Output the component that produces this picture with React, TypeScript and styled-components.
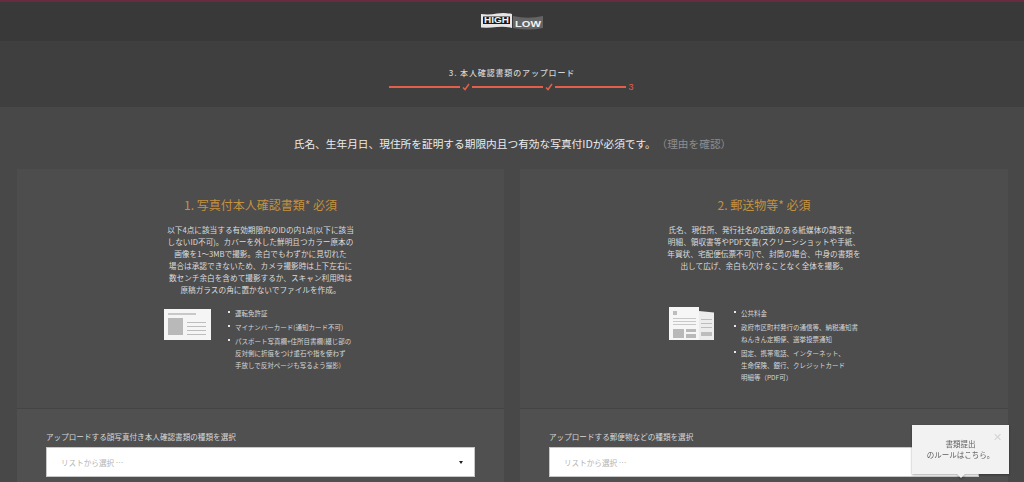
import styled, { createGlobalStyle } from "styled-components";

const GlobalStyle = createGlobalStyle`
    html, body {
        margin: 0;
        height: 482px;
        overflow: hidden;
        background-color: #484848;
    }
    body {
        font-family: "Noto Sans CJK JP", "Noto Sans", sans-serif;
        color: #e4e4e4;
    }
`;

const Page = styled.div`
    display: flex;
    flex-direction: column;
    height: 482px;
    overflow: hidden;
`;

const Header = styled.header`
    height: 39px;
    flex: none;
    display: flex;
    justify-content: center;
    align-items: center;
    background-color: #393939;
    border-top: 2px solid #6a2a42;
    box-sizing: content-box;
`;

const StepBar = styled.div`
    height: 66px;
    flex: none;
    display: flex;
    flex-direction: column;
    align-items: center;
    background-color: #3f3f3f;
`;

const StepTitle = styled.div`
    margin-top: 26px;
    font-size: 8px;
    line-height: 12px;
    letter-spacing: 0.85px;
    color: #d2d2d2;
    font-weight: 500;
`;

const Steps = styled.div`
    display: flex;
    align-items: center;
    height: 10px;
    margin-top: 3px;
    margin-left: 1px;
    column-gap: 2px;
    color: #e2604a;
`;

const StepLine = styled.div`
    width: 71px;
    height: 2px;
    background-color: #e2604a;
`;

const StepNumber = styled.span`
    font-size: 9px;
    line-height: 10px;
    width: 8px;
    margin-left: 1px;
    font-family: "Liberation Sans", sans-serif;
`;

const Main = styled.main`
    flex: 1;
    padding: 0 16px 0 17px;
    background-color: #484848;
`;

const Intro = styled.p`
    margin: 28px 0 0;
    height: 34px;
    font-size: 10.7px;
    line-height: 18px;
    text-align: center;
    color: #ececec;

    a {
        color: #8d8d8d;
        margin-left: 6px;
    }
`;

const Cards = styled.div`
    display: grid;
    grid-template-columns: 487px 488px;
    column-gap: 16px;
`;

const Card = styled.section`
    background-color: #4d4d4d;
`;

const Info = styled.div`
    height: 240px;
    padding-top: 26px;
    box-sizing: border-box;
    display: flex;
    flex-direction: column;
    align-items: center;
    border-bottom: 1px solid #444444;
`;

const Title = styled.h2`
    margin: 0;
    font-size: 12px;
    line-height: 20px;
    font-weight: 400;
    color: #c4923f;
`;

const Lead = styled.p`
    margin: 9px 0 0;
    height: 78px;
    font-size: 7.65px;
    line-height: 12px;
    text-align: center;
    color: #dcdcdc;
    white-space: nowrap;
`;

const Docs = styled.div<{ $left: number; $top: number; $gap: number }>`
    align-self: flex-start;
    display: flex;
    margin-left: ${(p) => p.$left}px;
    margin-top: ${(p) => p.$top}px;
    column-gap: ${(p) => p.$gap}px;
`;

const DocList = styled.ul`
    list-style: none;
    margin: 0;
    padding: 0;
    display: flex;
    flex-direction: column;
    row-gap: 2px;
    font-size: 6.5px;
    line-height: 12px;
    color: #d6d6d6;
    white-space: nowrap;
`;

const DocItem = styled.li`
    position: relative;
    padding-left: 7px;

    &::before {
        content: "";
        position: absolute;
        left: 0;
        top: 4px;
        width: 2px;
        height: 2px;
        background-color: #e6e6e6;
    }
`;

const Upload = styled.div`
    padding: 22px 29px 0;
    height: 80px;
    background-color: #505050;
`;

const UploadLabel = styled.label`
    display: block;
    font-size: 7.6px;
    line-height: 12px;
    color: #d8d8d8;
`;

const Select = styled.div`
    margin-top: 4px;
    height: 30px;
    box-sizing: border-box;
    display: flex;
    align-items: center;
    justify-content: space-between;
    padding: 0 11px 0 14px;
    background-color: #ffffff;
    border: 1px solid #c8c8c8;
    font-size: 7.6px;
    color: #b4b4b4;
`;

const Caret = styled.span`
    width: 0;
    height: 0;
    border-left: 2.5px solid transparent;
    border-right: 2.5px solid transparent;
    border-top: 3px solid #222222;
`;

const Tooltip = styled.aside`
    position: fixed;
    left: 912px;
    top: 425px;
    width: 97px;
    height: 49px;
    box-sizing: border-box;
    padding-top: 13px;
    background-color: #f2f2f2;
    filter: drop-shadow(0 1px 1px rgba(0, 0, 0, 0.35));
    text-align: center;
    font-size: 7.5px;
    line-height: 11px;
    color: #5c5c5c;

    &::after {
        content: "";
        position: absolute;
        left: 45px;
        bottom: -4px;
        border-left: 4px solid transparent;
        border-right: 4px solid transparent;
        border-top: 4px solid #f2f2f2;
    }
`;

const TooltipClose = styled.span`
    position: absolute;
    right: 7px;
    top: 6px;
    font-family: "Liberation Sans", sans-serif;
    font-size: 11px;
    line-height: 12px;
    color: #d4d4d4;
`;

const Logo = () => (
    <svg width="63" height="18" viewBox="0 0 63 18">
        <path d="M0 1 Q8 2 16 0.5 Q24 -0.5 31 1 V15 Q24 13 16 14 Q8 15 0 14.5 Z" fill="#e6e6e6" />
        <rect x="2" y="3.5" width="27" height="7.5" fill="#1a1a1a" />
        <text x="15.5" y="10.2" textAnchor="middle" fontFamily="Liberation Sans" fontWeight="700" fontSize="8.5" fill="#f0f0f0" textLength="25" lengthAdjust="spacingAndGlyphs">HIGH</text>
        <path d="M32 3 Q47 6.5 62 3 V15 Q47 18 32 15 Z" fill="#646464" />
        <text x="47" y="14" textAnchor="middle" fontFamily="Liberation Sans" fontWeight="700" fontSize="9" fill="#f2f2f2" textLength="26" lengthAdjust="spacingAndGlyphs">LOW</text>
    </svg>
);

const Check = () => (
    <svg width="8" height="8" viewBox="0 0 8 8">
        <path d="M1 4.5 L3 6.5 L7 1" fill="none" stroke="#e2604a" strokeWidth="1.5" />
    </svg>
);

const IdCardIcon = () => (
    <svg width="47" height="34" viewBox="0 0 47 34" style={{ flex: "none" }}>
        <rect width="47" height="31" y="2" fill="#f5f5f5" />
        <rect x="4" y="6" width="28" height="2" fill="#c8c8c8" />
        <rect x="4" y="11" width="15" height="17" fill="#b9b9b9" />
        <rect x="23" y="15" width="19" height="1" fill="#bdbdbd" />
        <rect x="23" y="19" width="19" height="1" fill="#bdbdbd" />
        <rect x="23" y="23" width="19" height="1" fill="#bdbdbd" />
        <rect x="23" y="27" width="19" height="1" fill="#bdbdbd" />
    </svg>
);

const PaperIcon = () => (
    <svg width="46" height="33" viewBox="0 0 46 33" style={{ flex: "none" }}>
        <path d="M30 4 L45 5.5 V33 H30 Z" fill="#ececec" />
        <rect x="32" y="12" width="11" height="1" fill="#bdbdbd" />
        <rect x="32" y="16" width="11" height="1" fill="#bdbdbd" />
        <rect x="32" y="20" width="11" height="1" fill="#bdbdbd" />
        <rect x="32" y="25" width="11" height="4" fill="#bdbdbd" />
        <rect width="30" height="33" fill="#f6f6f6" />
        <rect x="4" y="4" width="4" height="4" fill="#bdbdbd" />
        <rect x="4" y="11" width="23" height="1" fill="#c8c8c8" />
        <rect x="4" y="14" width="23" height="1" fill="#c8c8c8" />
        <rect x="4" y="17" width="23" height="1" fill="#c8c8c8" />
        <rect x="4" y="22" width="11" height="9" fill="#b9b9b9" />
        <rect x="17" y="22" width="10" height="3" fill="#b9b9b9" />
        <rect x="17" y="27" width="10" height="4" fill="#b9b9b9" />
    </svg>
);

export default function App() {
    return (
        <Page>
            <GlobalStyle />
            <Header>
                <Logo />
            </Header>
            <StepBar>
                <StepTitle>3. 本人確認書類のアップロード</StepTitle>
                <Steps>
                    <StepLine />
                    <Check />
                    <StepLine />
                    <Check />
                    <StepLine />
                    <StepNumber>3</StepNumber>
                </Steps>
            </StepBar>
            <Main>
                <Intro>
                    氏名、生年月日、現住所を証明する期限内且つ有効な写真付IDが必須です。<a>（理由を確認）</a>
                </Intro>
                <Cards>
                    <Card>
                        <Info>
                            <Title>1. 写真付本人確認書類* 必須</Title>
                            <Lead>
                                以下4点に該当する有効期限内のIDの内1点(以下に該当<br />
                                しないID不可)。カバーを外した鮮明且つカラー原本の<br />
                                画像を1～3MBで撮影。余白でもわずかに見切れた<br />
                                場合は承認できないため、カメラ撮影時は上下左右に<br />
                                数センチ余白を含めて撮影するか、スキャン利用時は<br />
                                原稿ガラスの角に置かないでファイルを作成。
                            </Lead>
                            <Docs $left={147} $top={5} $gap={17}>
                                <IdCardIcon />
                                <DocList>
                                    <DocItem>運転免許証</DocItem>
                                    <DocItem>マイナンバーカード(通知カード不可)</DocItem>
                                    <DocItem>
                                        パスポート写真欄+住所目書欄(綴じ部の<br />
                                        反対側に折痕をつけ重石や指を使わず<br />
                                        手放しで反対ページも写るよう撮影)
                                    </DocItem>
                                </DocList>
                            </Docs>
                        </Info>
                        <Upload>
                            <UploadLabel>アップロードする顔写真付き本人確認書類の種類を選択</UploadLabel>
                            <Select>
                                リストから選択 …
                                <Caret />
                            </Select>
                        </Upload>
                    </Card>
                    <Card>
                        <Info>
                            <Title>2. 郵送物等* 必須</Title>
                            <Lead>
                                氏名、現住所、発行社名の記載のある紙媒体の請求書、<br />
                                明細、領収書等やPDF文書(スクリーンショットや手紙、<br />
                                年賀状、宅配便伝票不可)で、封筒の場合、中身の書類を<br />
                                出して広げ、余白も欠けることなく全体を撮影。
                            </Lead>
                            <Docs $left={149} $top={5} $gap={19}>
                                <PaperIcon />
                                <DocList>
                                    <DocItem>公共料金</DocItem>
                                    <DocItem>
                                        政府市区町村発行の通信等、納税通知書<br />
                                        ねんきん定期便、選挙投票通知
                                    </DocItem>
                                    <DocItem>
                                        固定、携帯電話、インターネット、<br />
                                        生命保険、銀行、クレジットカード<br />
                                        明細等（PDF可）
                                    </DocItem>
                                </DocList>
                            </Docs>
                        </Info>
                        <Upload>
                            <UploadLabel>アップロードする郵便物などの種類を選択</UploadLabel>
                            <Select>
                                リストから選択 …
                                <Caret />
                            </Select>
                        </Upload>
                    </Card>
                </Cards>
            </Main>
            <Tooltip>
                <TooltipClose>✕</TooltipClose>
                書類提出<br />
                のルールはこちら。
            </Tooltip>
        </Page>
    );
}
